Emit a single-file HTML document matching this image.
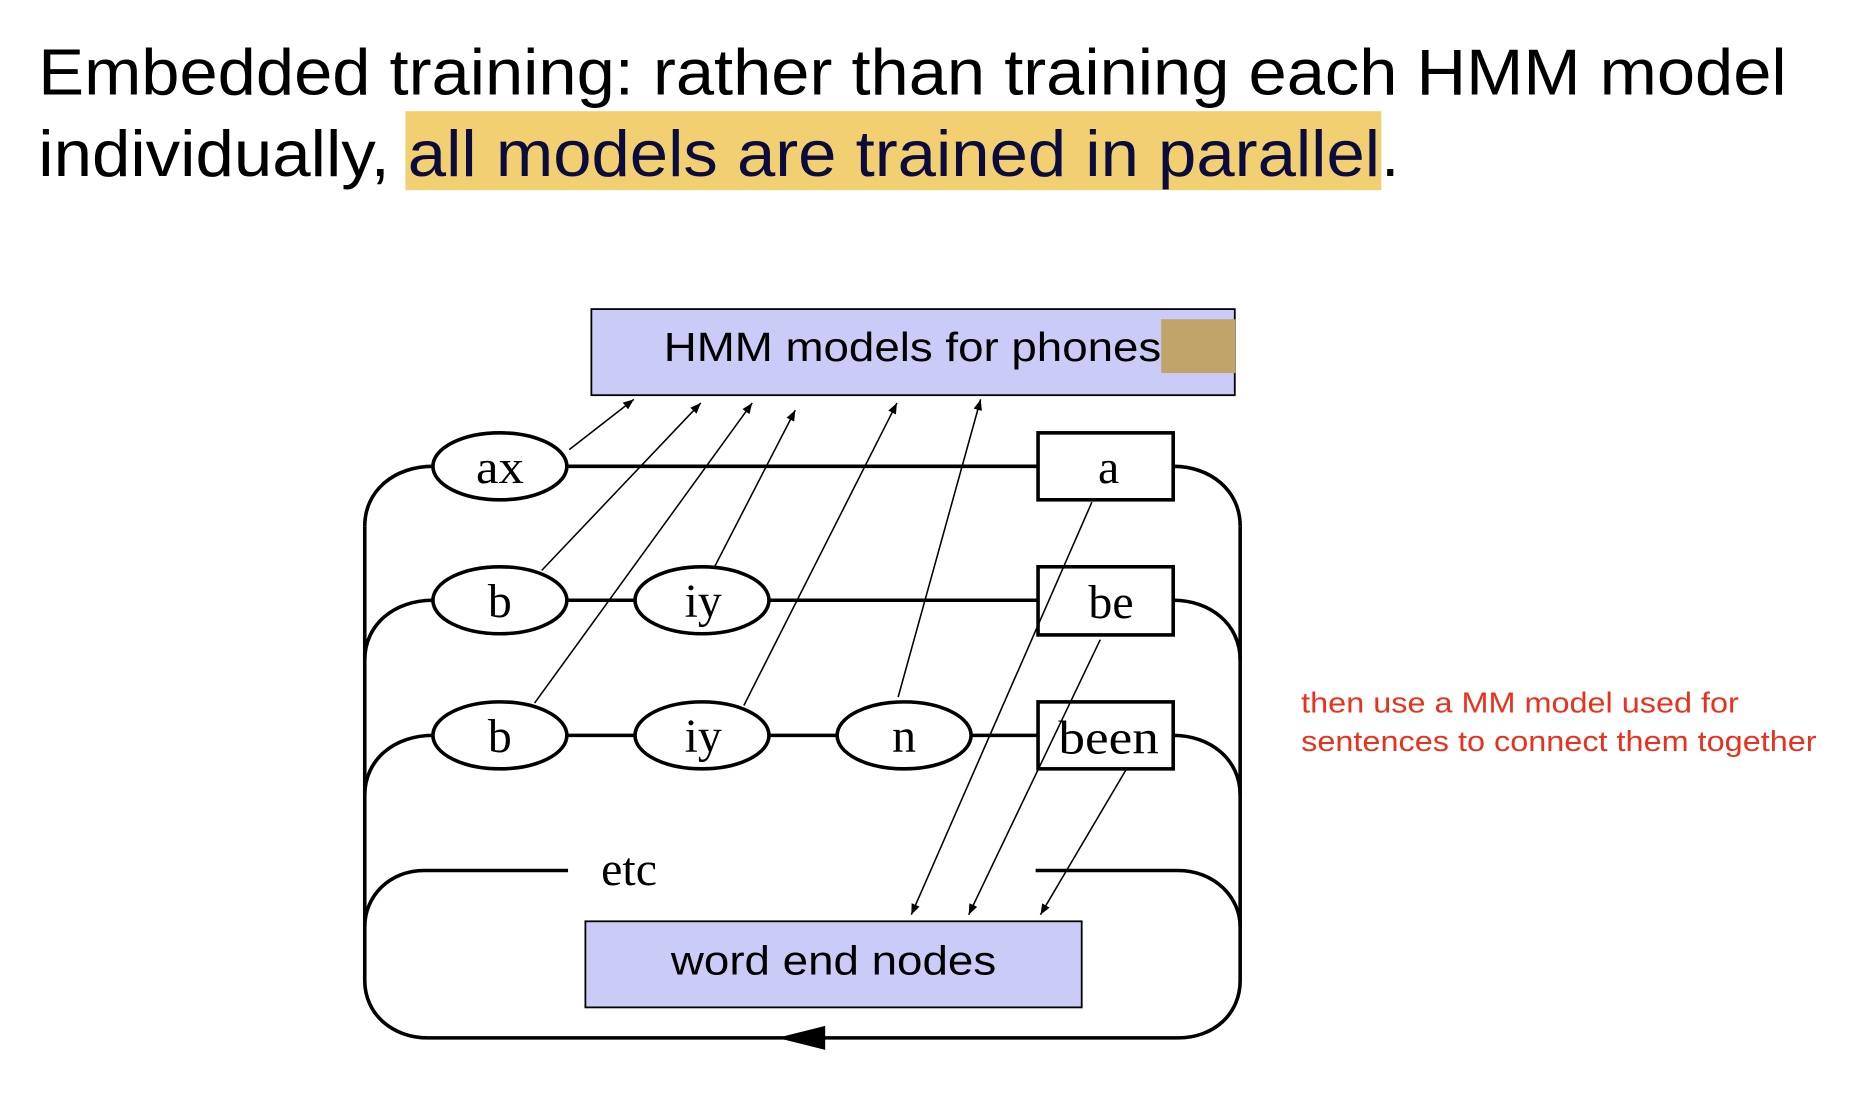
<!DOCTYPE html>
<html><head><meta charset="utf-8"><style>
html,body{margin:0;padding:0;background:#fff;width:1874px;height:1118px;overflow:hidden}
svg{display:block}
</style></head><body>
<svg width="1874" height="1118" viewBox="0 0 1567 935" preserveAspectRatio="none" xmlns="http://www.w3.org/2000/svg">
<defs><marker id="ah" viewBox="0 0 10 10" refX="10" refY="5" markerWidth="9" markerHeight="9" markerUnits="userSpaceOnUse" orient="auto"><path d="M0,1 L10,5 L0,9 z" fill="#000"/></marker></defs>
<rect x="339" y="93" width="816" height="66" fill="#f2cf70"/>
<g font-family="Liberation Sans, sans-serif" font-size="54">
<text x="32" y="79" fill="#000" textLength="1462" lengthAdjust="spacingAndGlyphs">Embedded training: rather than training each HMM model</text>
<text x="32" y="147" fill="#000" textLength="294" lengthAdjust="spacingAndGlyphs">individually,</text>
<text x="341" y="147" fill="#0b0b3e" textLength="813" lengthAdjust="spacingAndGlyphs">all models are trained in parallel</text>
<text x="1155" y="147" fill="#000">.</text>
</g>
<rect x="494.5" y="258.5" width="538" height="72" fill="#cbcbf8" stroke="#000" stroke-width="1.5"/>
<rect x="971" y="267" width="62" height="45" fill="#c0a46a"/>
<text x="555" y="302" font-family="Liberation Sans, sans-serif" font-size="34" textLength="416" lengthAdjust="spacingAndGlyphs">HMM models for phones</text>
<rect x="489.5" y="770.5" width="415" height="72" fill="#cbcbf8" stroke="#000" stroke-width="1.5"/>
<text x="561" y="815" font-family="Liberation Sans, sans-serif" font-size="34" textLength="272" lengthAdjust="spacingAndGlyphs">word end nodes</text>
<g fill="none" stroke="#000" stroke-width="3">
<path d="M474,390 H868 M474,502 H531 M643,502 H868 M474,615 H531 M643,615 H700 M812,615 H868"/>
<path d="M362,390 C330,390 305,410 305,440 M362,502 C330,502 305,522 305,552 M362,615 C330,615 305,635 305,665"/>
<path d="M981,390 C1012,390 1037,410 1037,440 M981,502 C1012,502 1037,522 1037,552 M981,615 C1012,615 1037,635 1037,665"/>
<path d="M475,728 H355 C325,728 305,750 305,775 M866,728 H985 C1015,728 1037,750 1037,775"/>
<path d="M305,440 V820 C305,848 328,868 358,868 H985 C1015,868 1037,848 1037,820 V440"/>
<ellipse cx="418" cy="390" rx="56" ry="28" fill="#fff"/>
<ellipse cx="418" cy="502" rx="56" ry="28" fill="#fff"/>
<ellipse cx="587" cy="502" rx="56" ry="28" fill="#fff"/>
<ellipse cx="418" cy="615" rx="56" ry="28" fill="#fff"/>
<ellipse cx="587" cy="615" rx="56" ry="28" fill="#fff"/>
<ellipse cx="756" cy="615" rx="56" ry="28" fill="#fff"/>
<rect x="868" y="362" width="113" height="56" fill="#fff"/>
<rect x="868" y="474" width="113" height="57" fill="#fff"/>
<rect x="868" y="587" width="113" height="56" fill="#fff"/>
</g>
<path d="M690,858 L650,868 L690,878 z" fill="#000"/>
<g stroke="#000" stroke-width="1.3" marker-end="url(#ah)">
<line x1="476" y1="376" x2="530" y2="334"/>
<line x1="453" y1="477" x2="586" y2="337"/>
<line x1="447" y1="588" x2="629" y2="337"/>
<line x1="597" y1="475" x2="665" y2="343"/>
<line x1="622" y1="590" x2="750" y2="337"/>
<line x1="751" y1="583" x2="820" y2="334"/>
<line x1="913" y1="420" x2="762" y2="765"/>
<line x1="920" y1="535" x2="810" y2="765"/>
<line x1="942" y1="643" x2="870" y2="765"/>
</g>
<g font-family="Liberation Serif, serif" font-size="40" text-anchor="middle">
<text x="418" y="404" textLength="40" lengthAdjust="spacingAndGlyphs">ax</text>
<text x="418" y="516">b</text>
<text x="588" y="516">iy</text>
<text x="418" y="629">b</text>
<text x="588" y="629">iy</text>
<text x="756" y="629">n</text>
<text x="927" y="404">a</text>
<text x="929" y="517">be</text>
<text x="927" y="630" textLength="84" lengthAdjust="spacingAndGlyphs">been</text>
<text x="526" y="740">etc</text>
</g>
<g font-family="Liberation Sans, sans-serif" font-size="24" fill="#e8321e">
<text x="1088" y="596" textLength="366" lengthAdjust="spacingAndGlyphs">then use a MM model used for</text>
<text x="1088" y="628" textLength="431" lengthAdjust="spacingAndGlyphs">sentences to connect them together</text>
</g>
</svg>
</body></html>
